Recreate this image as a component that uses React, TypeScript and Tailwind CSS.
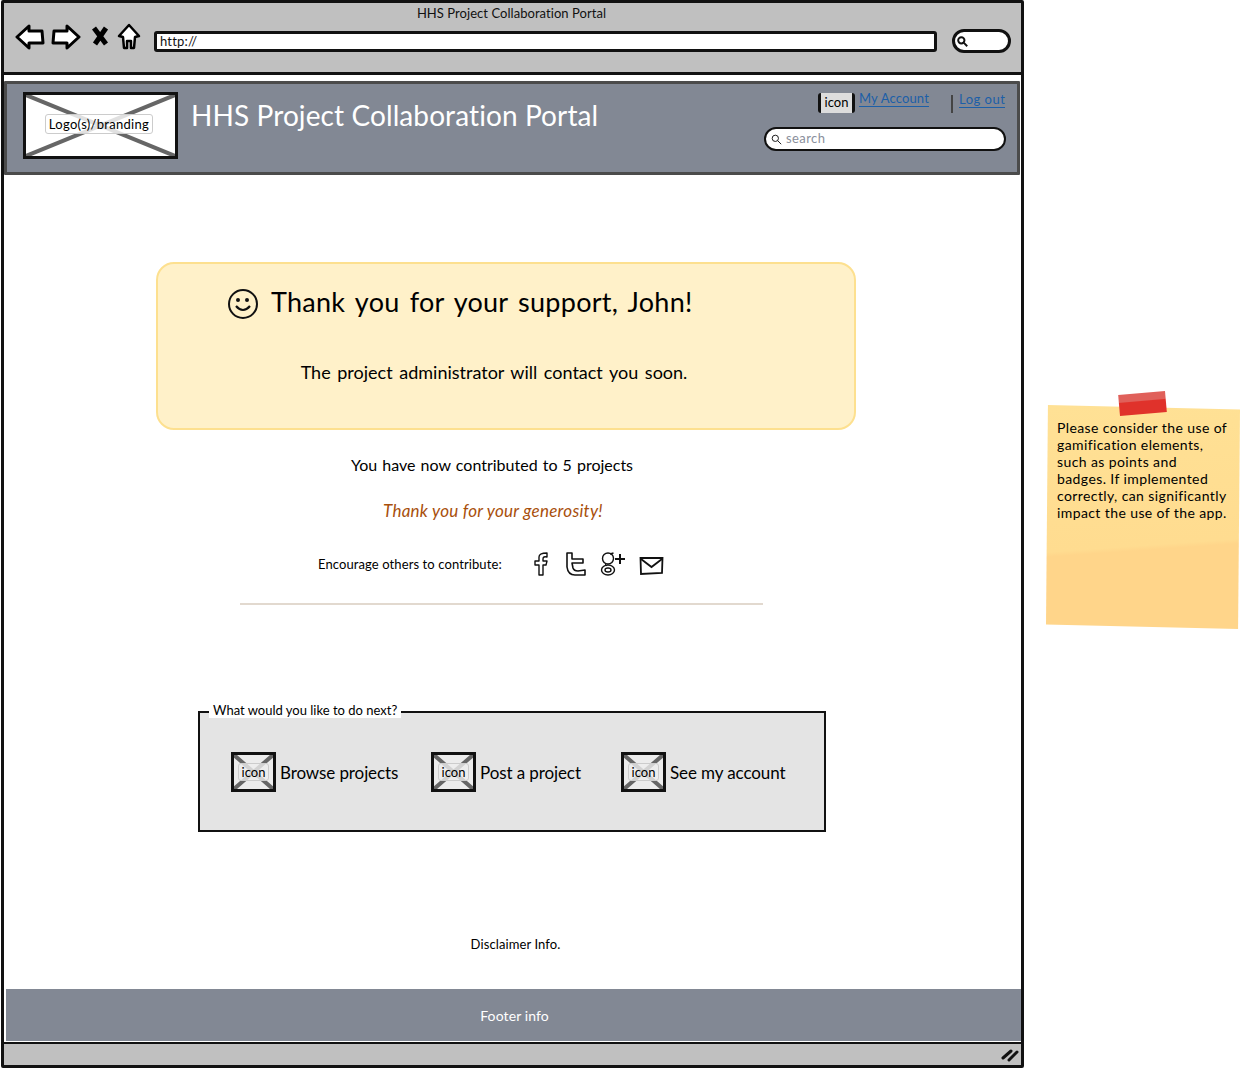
const font = { fontFamily: '"Lato", "Open Sans", sans-serif' };

function CrossBox({ className }: { className: string }) {
  return (
    <svg className={className} viewBox="0 0 100 100" preserveAspectRatio="none">
      <path d="M0 0 L100 100 M100 0 L0 100" stroke="#666" strokeWidth="4" vectorEffect="non-scaling-stroke" fill="none" />
    </svg>
  );
}

function NavIcons() {
  return (
    <div className="flex items-center w-[138px] ml-[11px] gap-[6px]">
      <svg width="30" height="28" viewBox="0 0 30 28" fill="white" stroke="black" strokeWidth="3" strokeLinejoin="round">
        <path d="M2 14 L14 3 L14 8 L27 8 L28 20 L14 20 L14 25 Z" />
      </svg>
      <svg width="30" height="28" viewBox="0 0 30 28" fill="white" stroke="black" strokeWidth="3" strokeLinejoin="round">
        <path d="M28 14 L16 3 L16 8 L3 8 L2 20 L16 20 L16 25 Z" />
      </svg>
      <svg width="18" height="20" viewBox="0 0 18 20" stroke="black" strokeWidth="5" className="ml-[4px] mb-[2px]">
        <path d="M3 2 L15 18 M15 2 L4 18" />
      </svg>
      <svg width="24" height="28" viewBox="0 0 24 28" fill="white" stroke="black" strokeWidth="2.5" strokeLinejoin="round" className="ml-[2px]">
        <path d="M12 2 L22 13 L18 14 L17 25 L14 25 L14 18 L10 18 L10 25 L7 25 L6 14 L2 13 Z" />
      </svg>
    </div>
  );
}

function SearchGlass({ size, width }: { size: number; width: number }) {
  return (
    <svg width={size} height={size} viewBox="0 0 14 14" fill="none" stroke="#111" strokeWidth={width}>
      <circle cx="5.5" cy="5.5" r="4" />
      <path d="M8.5 8.5 L13 13" />
    </svg>
  );
}

function Action({ label, width }: { label: string; width: string }) {
  return (
    <div className={`flex items-center ${width}`}>
      <div className="relative w-[45px] h-[40px] border-[3px] border-[#111] bg-[#ececec] flex items-center justify-center shrink-0">
        <CrossBox className="absolute inset-0 w-full h-full" />
        <span className="relative text-[13px] leading-[16px] px-[3px] rounded-[3px] border border-[#ccc] bg-[#eeeeee]/80 text-black">icon</span>
      </div>
      <span className="ml-[4px] mt-[2px] text-[17px] text-black tracking-[-0.1px]">{label}</span>
    </div>
  );
}

export default function App() {
  return (
    <div className="w-[1241px] h-[1069px] bg-white flex overflow-hidden" style={font}>
      {/* ventana */}
      <div className="w-[1023px] h-[1068px] ml-[1px] border-[3px] border-[#111] rounded-[2px] flex flex-col shrink-0 bg-white">
        <div className="h-[69px] bg-[#c0c0c0] border-b-[3px] border-[#111] box-content flex flex-col shrink-0">
          <div className="text-center text-[13px] leading-[16px] pt-[2px] pb-[1px] pr-[2px] text-[#111] tracking-[0.05px]">HHS Project Collaboration Portal</div>
          <div className="flex items-start mt-[1px]">
            <NavIcons />
            <div className="w-[783px] h-[21px] ml-[1px] mt-[8px] bg-white border-[3px] border-[#111] rounded-[3px] text-[13px] leading-[15px] pl-[3px] text-[#111] tracking-[0.2px]">http://</div>
            <div className="w-[59px] h-[24px] ml-[15px] mt-[6px] bg-white border-[3px] border-[#111] rounded-full flex items-center pl-[2px]">
              <SearchGlass size={11} width={2.5} />
            </div>
          </div>
        </div>

        <div className="h-[94px] mt-[6px] mr-[1px] bg-[#828894] border-[3px] border-[#4b4b4b] flex justify-between shrink-0 rounded-[1px]">
          <div className="flex items-start">
            <div className="relative w-[155px] h-[67px] ml-[16px] mt-[8px] pb-[3px] bg-white border-[3px] border-[#111] flex items-center justify-center">
              <CrossBox className="absolute inset-0 w-full h-full" />
              <span className="relative text-[13px] leading-[18px] px-[3px] mr-[3px] rounded-[3px] border border-[#ccc] bg-white/80 text-black tracking-[0.3px]">Logo(s)/branding</span>
            </div>
            <div className="ml-[13px] mt-[14px] text-[28px] leading-[34px] text-white tracking-[0.1px]">HHS Project Collaboration Portal</div>
          </div>
          <div className="w-[245px] mr-[11px] flex flex-col">
            <div className="flex items-start h-[30px] pt-[7px] pl-[57px] whitespace-nowrap">
              <div className="w-[37px] h-[20px] mt-[2px] bg-[#ddd] border-x-[3px] border-[#111] rounded-[3px] text-[13px] leading-[19px] text-center text-black">icon</div>
              <a className="ml-[4px] text-[13px] leading-[15px] text-[#1c5fa8] border-b border-[#1c5fa8] tracking-[0.15px]">My Account</a>
              <div className="w-[2px] h-[18px] ml-[22px] mt-[4px] bg-[#444]" />
              <a className="ml-[6px] mt-[1px] text-[13px] leading-[15px] text-[#1c5fa8] border-b border-[#1c5fa8] tracking-[0.5px]">Log out</a>
            </div>
            <div className="w-[242px] h-[24px] mt-[13px] ml-[3px] bg-white border-[2.5px] border-[#111] rounded-full flex items-center pl-[5px] gap-[4px]">
              <SearchGlass size={11} width={1.2} />
              <span className="text-[13px] text-[#8a8f9c] tracking-[0.4px]">search</span>
            </div>
          </div>
        </div>

        <div className="flex-1 flex flex-col min-h-0">
          <div className="w-[700px] h-[168px] ml-[152px] mt-[87px] bg-[#fff1c9] border-[2.5px] border-[#fde08f] rounded-[18px] flex flex-col shrink-0">
            <div className="flex items-center ml-[69px] mt-[20px] gap-[12px]">
              <svg width="32" height="32" viewBox="0 0 32 32" fill="none" stroke="#111" strokeWidth="2" className="mt-[3px]">
                <circle cx="16" cy="16" r="14" />
                <path d="M9 18 Q16 26 23 18" strokeWidth="2.2" />
                <circle cx="11" cy="12" r="1" fill="#111" />
                <circle cx="20" cy="12" r="1" fill="#111" />
              </svg>
              <span className="text-[27px] leading-[36px] text-black tracking-[0.27px] [word-spacing:3px]">Thank you for your support, John!</span>
            </div>
            <p className="mt-[41px] text-center text-[18px] leading-[22px] text-black tracking-[0px] [word-spacing:2px] pr-[24px]">The project administrator will contact you soon.</p>
          </div>

          <p className="mt-[24px] ml-[347px] text-[16px] leading-[22px] text-black tracking-[0px] [word-spacing:1px]">You have now contributed to 5 projects</p>
          <p className="mt-[24px] ml-[379px] text-[17px] leading-[22px] italic text-[#a84f0c] tracking-[0.25px]">Thank you for your generosity!</p>

          <div className="flex items-center mt-[26px] ml-[314px] h-[32px]">
            <span className="w-[215px] mt-[1px] text-[13px] text-black tracking-[0.1px]">Encourage others to contribute:</span>
            <svg width="16" height="26" viewBox="0 0 16 26" fill="white" stroke="#111" strokeWidth="1.4" strokeLinejoin="round">
              <path d="M6 24 L6 14 L2 14 L2 10 L6 10 L6 6 Q6 2 14 2 L14 6 Q10 5 10 8 L10 10 L14 10 L13 14 L10 14 L10 24 Z" />
            </svg>
            <svg width="22" height="26" viewBox="0 0 22 26" fill="white" stroke="#111" strokeWidth="1.6" strokeLinejoin="round" className="ml-[16px]">
              <path d="M2 2 L7 2 L7 8 L18 8 L18 12 L7 12 L8 17 Q9 20 13 20 L20 19 L20 24 L10 24 Q3 24 2 16 Z" />
            </svg>
            <svg width="26" height="26" viewBox="0 0 26 26" fill="white" stroke="#111" strokeWidth="1.4" className="ml-[13px]">
              <ellipse cx="8" cy="7.5" rx="5.5" ry="5.5" />
              <ellipse cx="8" cy="19" rx="6.5" ry="5" />
              <ellipse cx="8" cy="19" rx="3" ry="2" />
              <path d="M6 12.5 Q5 14 7 14.5 M10 3 L13.5 2" />
              <path d="M15 8 L25 8 M20 3 L20 13" strokeWidth="2" />
            </svg>
            <svg width="25" height="20" viewBox="0 0 25 20" fill="white" stroke="#111" strokeWidth="1.8" className="ml-[13px] mt-[3px]">
              <path d="M1.5 2 L23.5 2 L23 17 L2 18 Z" />
              <path d="M2 3 L12.5 11 L23 3" fill="none" />
            </svg>
          </div>

          <div className="w-[523px] h-[2px] ml-[236px] mt-[23px] bg-[#e2d9cf]" />

          <div className="relative w-[628px] h-[121px] ml-[194px] mt-[106px] bg-[#e4e4e4] border-[2.5px] border-[#111] flex items-center pl-[31px]">
            <span className="absolute left-[9px] top-[-10px] bg-white px-[4px] text-[13px] leading-[15px] text-black tracking-[0px]">What would you like to do next?</span>
            <Action label="Browse projects" width="w-[200px]" />
            <Action label="Post a project" width="w-[190px]" />
            <Action label="See my account" width="w-[180px]" />
          </div>

          <div className="mt-[104px] text-center text-[13px] leading-[16px] text-black tracking-[0.1px] pl-[6px]">Disclaimer Info.</div>

          <div className="h-[52px] mt-[37px] ml-[2px] pl-[2px] bg-[#828894] flex items-center justify-center text-[14px] text-white tracking-[0.1px] shrink-0">Footer info</div>
        </div>

        <div className="h-[23px] bg-[#c0c0c0] border-t-[2.5px] border-[#111] flex justify-end items-center pr-[2px] shrink-0">
          <svg width="18" height="14" viewBox="0 0 18 14" stroke="#111" strokeWidth="3" strokeLinecap="round">
            <path d="M2 10 L10 3 M8 12 L16 4" />
          </svg>
        </div>
      </div>

      {/* nota */}
      <div className="flex-1 pl-[22px] pt-[405px]">
        <div className="relative w-[194px] h-[224px]">
          <div className="w-full h-full pl-[11px] pt-[14px] bg-[linear-gradient(176deg,#ffe195_0%,#ffdc90_62%,#ffd58a_64%,#ffd58a_100%)] [clip-path:polygon(1%_0,100%_2%,99%_100%,0_98%)] text-[14px] leading-[17px] text-black tracking-[0.4px]">
            Please consider the use of<br />gamification elements,<br />such as points and<br />badges. If implemented<br />correctly, can significantly<br />impact the use of the app.
          </div>
          <div className="absolute left-[73px] top-[-12px] w-[47px] h-[21px] bg-[linear-gradient(180deg,#e0605a_0%,#e0605a_35%,#e0322b_40%,#e0322b_100%)] -rotate-[5deg]" />
        </div>
      </div>
    </div>
  );
}
